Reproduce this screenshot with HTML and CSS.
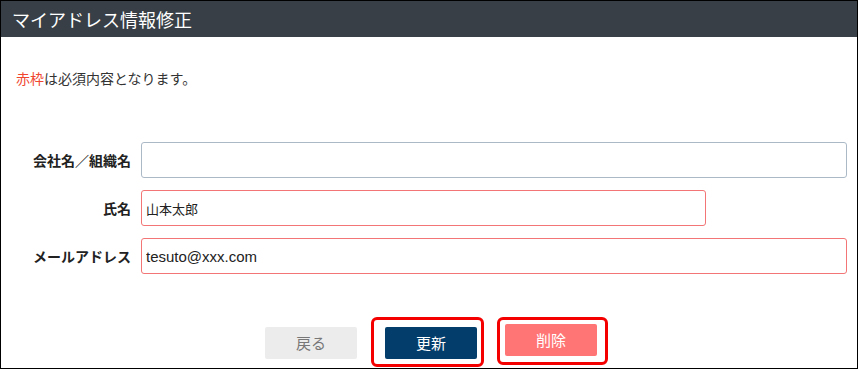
FILE: index.html
```html
<!DOCTYPE html>
<html lang="ja">
<head>
<meta charset="utf-8">
<title>マイアドレス情報修正</title>
<link rel="stylesheet" href="styles.css">
</head>
<body>
<div class="frame">
  <header class="head">マイアドレス情報修正</header>
  <p class="note"><span class="req">赤枠</span>は必須内容となります。</p>
  <form class="form">
    <div class="row">
      <label class="lbl">会社名／組織名</label>
      <div class="field"><input class="inp" type="text" value=""></div>
    </div>
    <div class="row">
      <label class="lbl">氏名</label>
      <div class="field"><input class="inp inp-req inp-short" type="text" value="山本太郎"></div>
    </div>
    <div class="row">
      <label class="lbl">メールアドレス</label>
      <div class="field"><input class="inp inp-req inp-mail" type="text" value="tesuto@xxx.com"></div>
    </div>
  </form>
  <div class="actions">
    <button class="btn btn-back" type="button">戻る</button>
    <span class="mark mark-a"><button class="btn btn-update" type="button">更新</button></span>
    <span class="mark mark-b"><button class="btn btn-delete" type="button">削除</button></span>
  </div>
</div>
</body>
</html>
```

FILE: styles.css
```css
* { box-sizing: border-box; }
html, body { margin: 0; padding: 0; background: #fff; }
body {
  font-family: "Noto Sans CJK JP", "Noto Sans", "Liberation Sans", sans-serif;
  color: #333;
}
.frame {
  width: 858px;
  height: 369px;
  border: 1px solid #000;
  overflow: hidden;
}
.head {
  height: 36px;
  background: #393f46;
  color: #fff;
  font-size: 18px;
  line-height: 36px;
  padding-left: 11px;
}
.note {
  margin: 32px 0 0 15px;
  font-size: 14px;
  line-height: 18px;
  color: #333;
}
.req { color: #f0452f; }
.form {
  margin-top: 55px;
  display: flex;
  flex-direction: column;
  gap: 12px;
}
.row {
  display: flex;
  align-items: center;
  gap: 10px;
}
.lbl {
  width: 130px;
  text-align: right;
  font-size: 14px;
  font-weight: bold;
  color: #222;
}
.field { flex: 0 0 706px; }
.inp {
  display: block;
  width: 706px;
  height: 36px;
  border: 1px solid #abb9c6;
  border-radius: 3px;
  padding: 0 4px;
  font-family: "Noto Sans CJK JP", "Noto Sans", sans-serif;
  font-size: 13px;
  color: #222;
  background: #fff;
}
.inp-req { border-color: #f37575; }
.inp-short { width: 565px; }
.inp-mail {
  font-family: "Liberation Sans", "Noto Sans CJK JP", sans-serif;
  font-size: 15px;
}
.actions {
  margin-top: 43px;
  padding-left: 264px;
  display: flex;
  align-items: flex-start;
}
.btn {
  display: block;
  width: 92px;
  height: 32px;
  border: 0;
  border-radius: 2px;
  font-family: "Noto Sans CJK JP", "Noto Sans", sans-serif;
  font-size: 15px;
  line-height: 32px;
  padding: 0;
  cursor: pointer;
}
.btn-back {
  margin-top: 10px;
  background: #ececec;
  color: #777;
}
.btn-update { background: #033d6b; color: #fff; }
.btn-delete { background: #ff7575; color: #fff; }
.mark {
  display: block;
  border: 3px solid #f40000;
  border-radius: 6px;
}
.mark-a {
  margin-left: 14px;
  padding: 7px 4px 5px 11px;
}
.mark-b {
  margin-left: 13px;
  padding: 4px 8px 6px 5px;
}
```
